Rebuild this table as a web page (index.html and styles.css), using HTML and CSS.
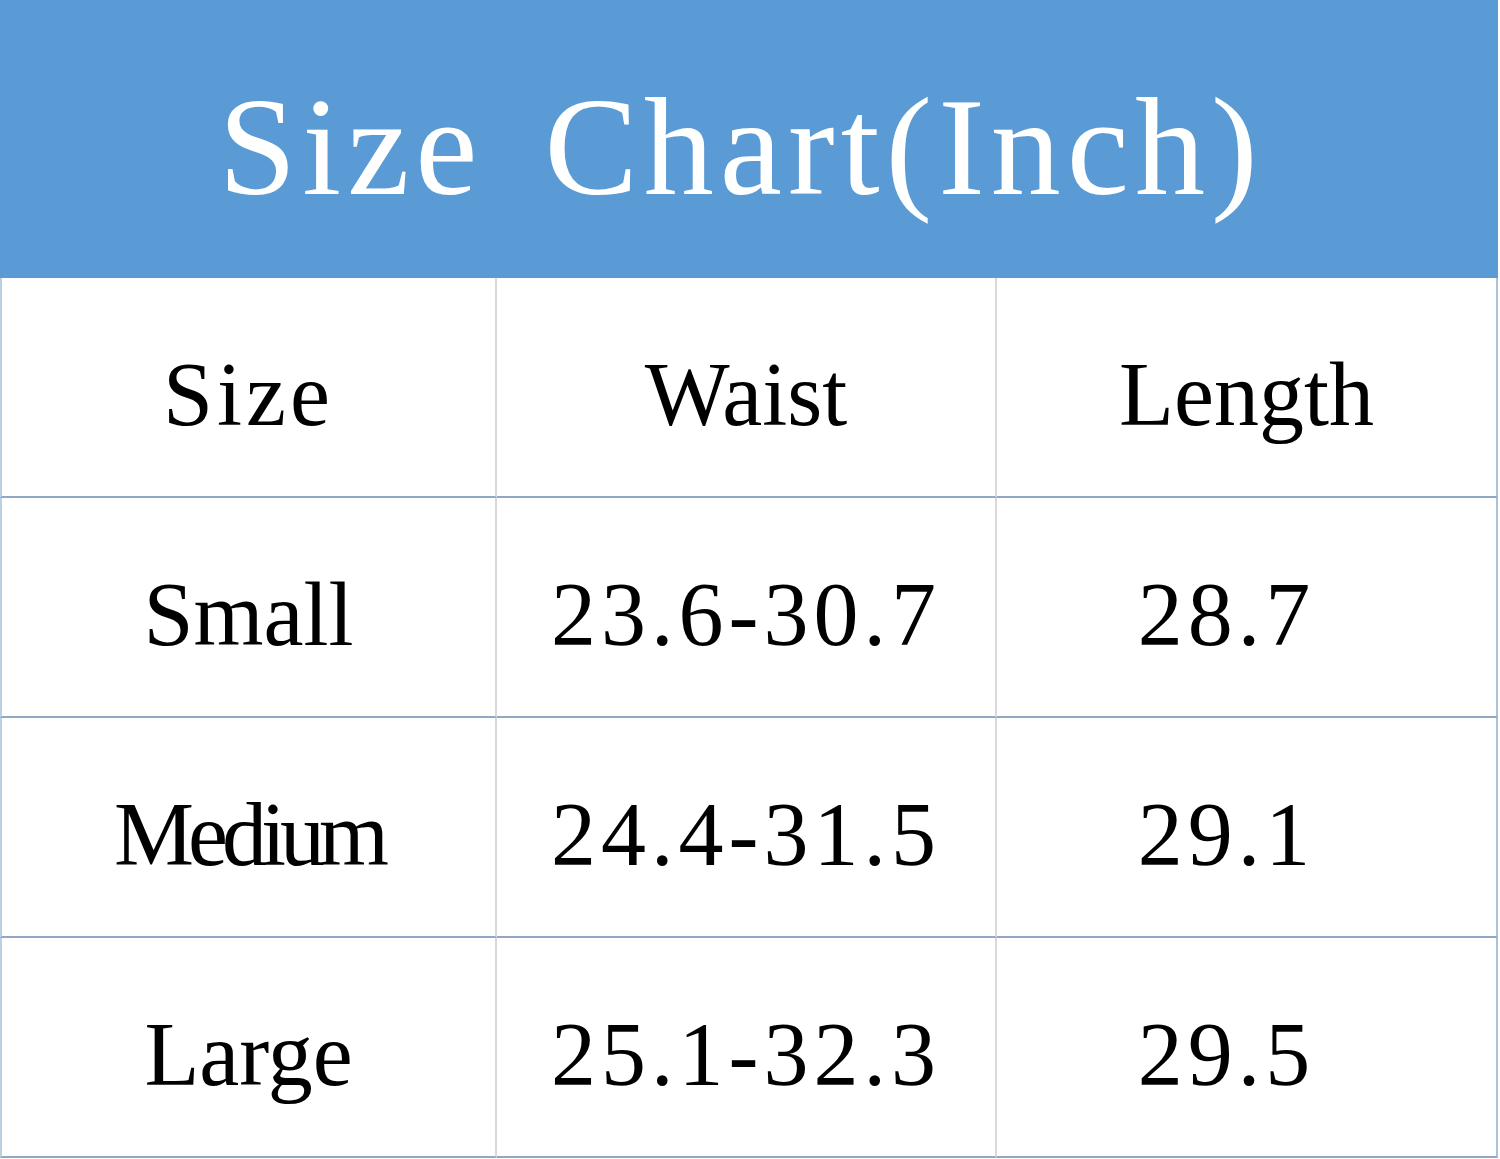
FILE: index.html
```html
<!DOCTYPE html>
<html lang="en">
<head>
<meta charset="utf-8">
<title>Size Chart</title>
<link rel="stylesheet" href="styles.css">
</head>
<body>
<div class="chart">
  <div class="banner"><h1 class="title">Size Chart(Inch)</h1></div>
  <div class="grid">
    <div class="cell c1 head">Size</div>
    <div class="cell c2">Waist</div>
    <div class="cell c3">Length</div>

    <div class="cell c1">Small</div>
    <div class="cell c2 num">23.6-30.7</div>
    <div class="cell c3 num">28.7</div>

    <div class="cell c1 tight">Medium</div>
    <div class="cell c2 num">24.4-31.5</div>
    <div class="cell c3 num">29.1</div>

    <div class="cell c1">Large</div>
    <div class="cell c2 num">25.1-32.3</div>
    <div class="cell c3 num">29.5</div>
  </div>
</div>
</body>
</html>
```

FILE: styles.css
```css
html, body {
  margin: 0;
  padding: 0;
  background: #ffffff;
}

.chart {
  width: 1500px;
  height: 1159px;
  overflow: hidden;
  font-family: "Liberation Serif", "Times New Roman", serif;
}

.banner {
  height: 278px;
  width: 1498px;
  background: #5b9bd5;
  display: flex;
  align-items: center;
  justify-content: center;
}

.title {
  margin: 0;
  padding: 16px 16px 0 0;
  color: #ffffff;
  font-weight: normal;
  font-size: 140px;
  line-height: 1;
  letter-spacing: 6px;
  word-spacing: 20px;
  white-space: nowrap;
}

.grid {
  display: grid;
  grid-template-columns: 497px 500px 501px;
  grid-auto-rows: 220px;
  width: 1498px;
}

.cell {
  display: flex;
  align-items: center;
  justify-content: center;
  box-sizing: border-box;
  border-bottom: 2px solid #8fa8c6;
  font-size: 90px;
  line-height: 1;
  color: #000000;
  padding-top: 16px;
  white-space: nowrap;
}

.c1 {
  border-left: 2px solid #b9cfe2;
  border-right: 2px solid #d9d9d9;
}

.c2 {
  border-right: 2px solid #d9d9d9;
}

.c3 {
  border-right: 2px solid #aac2d8;
}

.head {
  letter-spacing: 4px;
}

.num {
  letter-spacing: 5px;
}

.c3.num {
  padding-right: 40px;
}

.tight {
  letter-spacing: -6px;
}
```
